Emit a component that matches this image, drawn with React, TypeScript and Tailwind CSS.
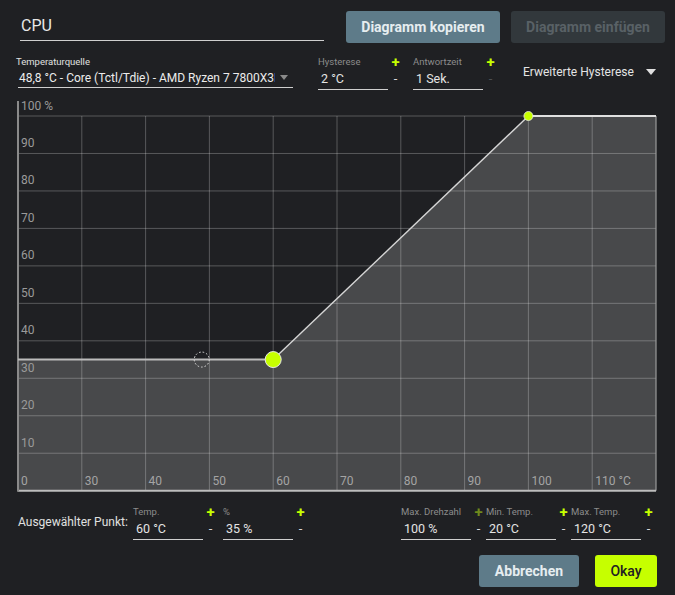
import React from 'react';

const GREEN = '#c6ff00';

interface FieldProps {
  label: string;
  value: string;
  ml: string;
  plusDim?: boolean;
  minusDim?: boolean;
}

const NumField: React.FC<FieldProps> = ({ label, value, ml, plusDim, minusDim }) => (
  <div className={`flex ${ml}`}>
    <div className="w-[70px] flex flex-col">
      <div className="h-[12px] text-[9.5px] leading-[12px] text-[#8c8c8c]">{label}</div>
      <div className="h-[22px] text-[12.5px] leading-[18px] pl-[3px] pt-[2px] text-[#e4e4e4] border-b border-[#cfcfcf]">
        {value}
      </div>
    </div>
    <div className="w-[15px] flex flex-col items-center">
      <div
        className={`h-[12px] text-[15px] leading-[12px] font-bold ${plusDim ? 'text-[#6f8a1c]' : 'text-[#c6ff00]'}`}
      >
        +
      </div>
      <div className={`h-[22px] text-[13px] leading-[22px] ${minusDim ? 'text-[#4d5154]' : 'text-[#d8d8d8]'}`}>-</div>
    </div>
  </div>
);

const Chart: React.FC = () => {
  const left = 18;
  const right = 656;
  const top = 20;
  const bottom = 394.7;
  const dx = (right - left) / 10;
  const dy = (bottom - top) / 10;
  const xs = Array.from({ length: 11 }, (_, i) => left + i * dx);
  const ys = Array.from({ length: 11 }, (_, j) => top + j * dy);
  const xLabels = ['0', '30', '40', '50', '60', '70', '80', '90', '100', '110 °C'];
  const yLabels = ['100 %', '90', '80', '70', '60', '50', '40', '30', '20', '10'];
  const px = (t: number) => left + ((t - 20) / 100) * (right - left);
  const py = (p: number) => bottom - (p / 100) * (bottom - top);
  const p1 = { x: px(60), y: py(35) };
  const p2 = { x: px(100), y: py(100) };

  return (
    <svg width="675" height="400" viewBox="0 0 675 400" className="block">
      <polygon
        points={`${left},${p1.y} ${p1.x},${p1.y} ${p2.x},${p2.y} ${right},${top} ${right},${bottom} ${left},${bottom}`}
        fill="#48494b"
      />
      {xs.slice(1, 10).map((x) => (
        <line key={'v' + x} x1={x} y1={top} x2={x} y2={bottom} stroke="rgba(255,255,255,0.25)" strokeWidth="1" />
      ))}
      {ys.slice(0, 10).map((y) => (
        <line key={'h' + y} x1={left} y1={y} x2={right} y2={y} stroke="rgba(255,255,255,0.25)" strokeWidth="1" />
      ))}
      <line x1={right} y1={top} x2={right} y2={bottom} stroke="#9a9a9a" strokeWidth="1.2" />
      <line x1={left} y1={bottom} x2={right} y2={bottom} stroke="#bdbdbd" strokeWidth="2" />
      <line x1={left} y1={5} x2={left} y2={bottom + 1} stroke="#8a8a8a" strokeWidth="2" />

      <line x1={left} y1={p1.y} x2={p1.x} y2={p1.y} stroke="#bcbcbc" strokeWidth="2" />
      <line x1={p1.x} y1={p1.y} x2={p2.x} y2={p2.y} stroke="#d6d6d6" strokeWidth="1.4" />
      <line x1={p2.x} y1={p2.y} x2={right} y2={top} stroke="#e0e0e0" strokeWidth="2" />

      {yLabels.map((l, j) => (
        <text
          key={l}
          x={left + 3}
          y={(j === 0 ? top : ys[j]) - (j === 0 ? 6 : 6.5)}
          fontSize="12"
          fill="#9a9a9a"
          fontFamily="Roboto, sans-serif"
        >
          {l}
        </text>
      ))}
      {xLabels.map((l, i) => (
        <text key={l} x={xs[i] + 3} y={bottom - 6} fontSize="12" fill="#a4a4a4" fontFamily="Roboto, sans-serif">
          {l}
        </text>
      ))}

      <circle cx={px(48.8)} cy={p1.y} r="7.5" fill="none" stroke="#e0e0e0" strokeWidth="1" strokeDasharray="1.6 2" />
      <circle cx={p1.x} cy={p1.y} r="8" fill={GREEN} stroke="#e8e8e8" strokeWidth="1" />
      <circle cx={p2.x} cy={p2.y} r="4.5" fill={GREEN} stroke="#e8e8e8" strokeWidth="0.8" />
    </svg>
  );
};

const App: React.FC = () => {
  return (
    <div className="w-[675px] h-[595px] bg-[#1f2023] font-['Roboto',sans-serif] text-[#e6e6e6] flex flex-col overflow-hidden">
      {/* title + copy/paste */}
      <div className="flex items-start pt-[11px]">
        <div className="ml-[20px] w-[304px] h-[30px] border-b border-[#cfcfcf] text-[16px] leading-[30px] pl-[1px] text-[#e8e8e8]">
          CPU
        </div>
        <button className="ml-[22px] w-[154px] h-[32px] rounded-[3px] bg-[#5e7b89] text-[14px] font-bold text-[#e6edf0]">
          Diagramm kopieren
        </button>
        <button className="ml-[11px] w-[154px] h-[32px] rounded-[3px] bg-[#32383c] text-[14px] font-bold text-[#596166]">
          Diagramm einfügen
        </button>
      </div>

      {/* source / hysteresis row */}
      <div className="flex items-start mt-[13px] h-[36px]">
        <div className="ml-[16px] flex flex-col">
          <div className="h-[12px] text-[9.5px] leading-[12px] text-[#e0e0e0]">Temperaturquelle</div>
          <div className="ml-[2px] w-[275px] h-[20px] border-b border-[#cfcfcf] flex items-center">
            <span className="flex-1 text-[12px] leading-[16px] pl-[1px] whitespace-nowrap overflow-hidden text-[#ececec]">
              48,8 °C - Core (Tctl/Tdie) - AMD Ryzen 7 7800X3D
            </span>
            <span className="w-[18px] flex justify-center">
              <span className="w-0 h-0 border-l-[4.5px] border-r-[4.5px] border-t-[5px] border-l-transparent border-r-transparent border-t-[#8a8a8a]" />
            </span>
          </div>
        </div>
        <NumField label="Hysterese" value="2 °C" ml="ml-[25px]" />
        <NumField label="Antwortzeit" value="1 Sek." ml="ml-[10px]" minusDim />
        <div className="ml-[25px] flex items-center h-[32px] text-[12px] text-[#e4e4e4]">
          <span>Erweiterte Hysterese</span>
          <span className="ml-[12px] w-0 h-0 border-l-[5px] border-r-[5px] border-t-[6px] border-l-transparent border-r-transparent border-t-[#e0e0e0]" />
        </div>
      </div>

      {/* curve */}
      <div className="mt-[4px]">
        <Chart />
      </div>

      {/* selected point */}
      <div className="flex items-start mt-[10px] h-[34px]">
        <div className="ml-[18px] w-[115px] pt-[9px] text-[12px] leading-[14px] text-[#e0e0e0]">
          Ausgewählter Punkt:
        </div>
        <NumField label="Temp." value="60 °C" ml="ml-[0px]" />
        <NumField label="%" value="35 %" ml="ml-[5px]" />
        <NumField label="Max. Drehzahl" value="100 %" ml="ml-[93px]" plusDim />
        <NumField label="Min. Temp." value="20 °C" ml="ml-[0px]" />
        <NumField label="Max. Temp." value="120 °C" ml="ml-[0px]" />
      </div>

      {/* actions */}
      <div className="flex justify-end mt-[15px] pr-[18px] gap-[16px]">
        <button className="w-[100px] h-[32px] rounded-[3px] bg-[#5e7b89] text-[14px] font-bold text-[#e6edf0]">
          Abbrechen
        </button>
        <button className="w-[62px] h-[32px] rounded-[3px] bg-[#c6ff00] text-[14px] font-medium text-[#1f2023]">
          Okay
        </button>
      </div>
    </div>
  );
};

export default App;
